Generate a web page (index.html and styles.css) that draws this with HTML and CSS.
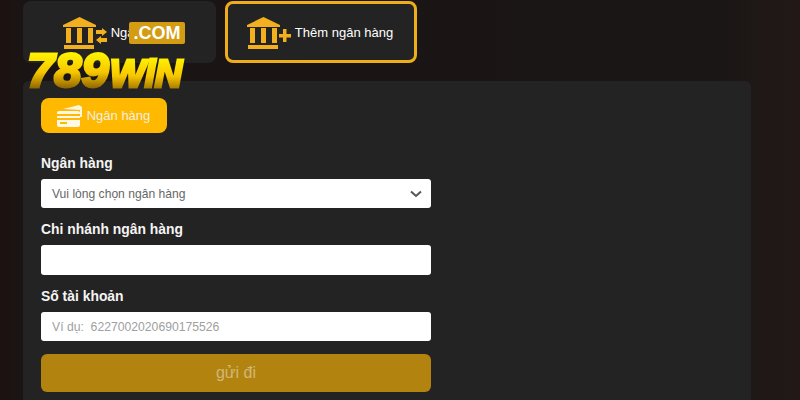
FILE: index.html
```html
<!DOCTYPE html>
<html lang="vi">
<head>
    <meta charset="UTF-8">
    <meta name="viewport" content="width=device-width, initial-scale=1.0">
    <title>Ngân hàng</title>
    <link rel="stylesheet" href="styles.css">
</head>
<body>

<div class="logo">
    <span class="logo-com">.COM</span>
    <div class="logo-name">
        <span class="logo-num">789</span>
        <span class="logo-win">WiN</span>
    </div>
</div>

<div class="tabs">
    <a class="tab" href="#">
        <svg class="tab-icon" width="44" height="32" viewBox="0 0 44 32">
            <path d="M16.5 0 L33 8 V10 H0 V8 Z" fill="#f2b01e"/>
            <path d="M3 11 H8 V26 H3 Z M14 11 H19 V26 H14 Z M25 11 H30 V26 H25 Z M1 28 H31 V32 H1 Z" fill="#f2b01e"/>
            <path d="M33 13 H39 V11 L44 15 L39 19 V17 H33 Z" fill="#f2b01e"/>
            <path d="M44 21 H38 V19 L33 23 L38 27 V25 H44 Z" fill="#f2b01e"/>
        </svg>
        <span>Ngân hàng</span>
    </a>
    <a class="tab tab-active" href="#">
        <svg class="tab-icon" width="44" height="32" viewBox="0 0 44 32">
            <path d="M16.5 0 L33 8 V10 H0 V8 Z" fill="#f2b01e"/>
            <path d="M3 11 H8 V26 H3 Z M14 11 H19 V26 H14 Z M25 11 H30 V26 H25 Z M1 28 H31 V32 H1 Z" fill="#f2b01e"/>
            <path d="M36 12 H39.5 V17 H44 V20.500 H39.500 V25 H36 V20.500 H32 V17 H36 Z" fill="#f2b01e"/>
        </svg>
        <span>Thêm ngân hàng</span>
    </a>
</div>

<div class="panel">
    <a class="bank-btn" href="#">
        <svg width="26" height="24" viewBox="0 0 26 24">
            <path d="M6 5 L22 1 L25 3 V13 L23 13 V6 Z" fill="#fff" opacity="0.85"/>
            <path d="M2 7 H21 Q23 7 23 9 V10 H0 V9 Q0 7 2 7 Z M0 12 H23 V14 H0 Z M0 16 H23 V21 Q23 23 21 23 H2 Q0 23 0 21 Z" fill="#fff" opacity="0.9"/>
            <rect x="3" y="18" width="7" height="2" fill="#ffb900"/>
        </svg>
        <span>Ngân hàng</span>
    </a>

    <form class="bank-form">
        <label class="field-label">Ngân hàng</label>
        <div class="select-box">
            <span>Vui lòng chọn ngân hàng</span>
            <svg width="12" height="8" viewBox="0 0 12 8">
                <path d="M1 1.500 L6 6 L11 1.500" fill="none" stroke="#555" stroke-width="2"/>
            </svg>
        </div>

        <label class="field-label">Chi nhánh ngân hàng</label>
        <input class="field-input" type="text">

        <label class="field-label">Số tài khoản</label>
        <input class="field-input field-short" type="text" placeholder="Ví dụ:  6227002020690175526">

        <button class="submit-btn" type="button">gửi đi</button>
    </form>
</div>

</body>
</html>
```

FILE: styles.css
```css
html, body {
    height: 400px;
    overflow: hidden;
}
body {
    font-family: "Liberation Sans", Arial, sans-serif;
    margin: 0;
    padding: 1px 0 0 23px;
    box-sizing: border-box;
    background-color: #1a1514;
    background-image: linear-gradient(90deg, #1c1211 0, #1a1514 3%, #1a1615 90%, #221917 100%);
    color: #fff;
}
a {
    text-decoration: none;
    color: inherit;
}

/* watermark over the tabs */
.logo {
    position: absolute;
    left: 28px;
    top: 22px;
    width: 158px;
    height: 68px;
}
.logo-com {
    position: absolute;
    left: 101px;
    top: 0;
    width: 56px;
    height: 22px;
    background-color: #d49c12;
    border-radius: 2px;
    font-size: 18px;
    font-weight: bold;
    line-height: 22px;
    text-align: center;
}
.logo-name {
    position: absolute;
    left: -3px;
    top: 26px;
    display: flex;
    align-items: baseline;
    gap: 1px;
    white-space: nowrap;
    font-weight: bold;
    font-style: italic;
}
.logo-num, .logo-win {
    -webkit-text-stroke: 3px transparent;
    padding: 0 3px 0 2px;
    background: linear-gradient(#fff000 15%, #f7c600 55%, #8f6400 92%);
    -webkit-background-clip: text;
    background-clip: text;
    color: transparent;
}
.logo-num {
    font-size: 49px;
    line-height: 44px;
    letter-spacing: 0;
}
.logo-win {
    font-size: 38px;
    line-height: 44px;
    letter-spacing: -0.5px;
    margin-left: -5px;
}

.tabs {
    display: flex;
    gap: 9px;
    margin-bottom: 18px;
}
.tab {
    width: 193px;
    height: 62px;
    box-sizing: border-box;
    display: flex;
    align-items: center;
    justify-content: center;
    gap: 4px;
    padding-right: 2px;
    background-color: #232323;
    border-radius: 8px;
    font-size: 13px;
}
.tab-icon {
    margin-top: 2px;
}
.tab-active {
    width: 192px;
    border: 3px solid #eeae1c;
}

.panel {
    width: 728px;
    height: 330px;
    box-sizing: border-box;
    padding: 17px 18px;
    background-color: #232323;
    border-radius: 6px;
}
.bank-btn {
    display: flex;
    align-items: center;
    justify-content: center;
    gap: 4px;
    width: 126px;
    height: 35px;
    padding-right: 1px;
    box-sizing: border-box;
    background-color: #ffb900;
    border-radius: 8px;
    font-size: 13px;
    color: #f4efe0;
}
.bank-form {
    display: flex;
    flex-direction: column;
    width: 390px;
    margin-top: 22px;
}
.field-label {
    font-size: 13.9px;
    font-weight: bold;
    line-height: 16px;
    margin-bottom: 8px;
    color: #f4f4f4;
}
.select-box {
    display: flex;
    align-items: center;
    justify-content: space-between;
    box-sizing: border-box;
    height: 29px;
    padding: 0 9px 0 11px;
    margin-bottom: 13px;
    background-color: #fff;
    border-radius: 3px;
    font-size: 12.1px;
    color: #666;
}
.field-input {
    display: block;
    box-sizing: border-box;
    height: 30px;
    padding: 0 11px;
    margin: 0 0 13px;
    background-color: #fff;
    border: 0;
    border-radius: 3px;
    font-family: inherit;
    font-size: 12.2px;
}
.field-short {
    height: 29px;
}
.field-input::placeholder {
    color: #a0a0a0;
}
.submit-btn {
    height: 38px;
    background-color: #b2830f;
    border: 0;
    border-radius: 6px;
    font-family: inherit;
    font-size: 16px;
    color: #d0b878;
}
```
